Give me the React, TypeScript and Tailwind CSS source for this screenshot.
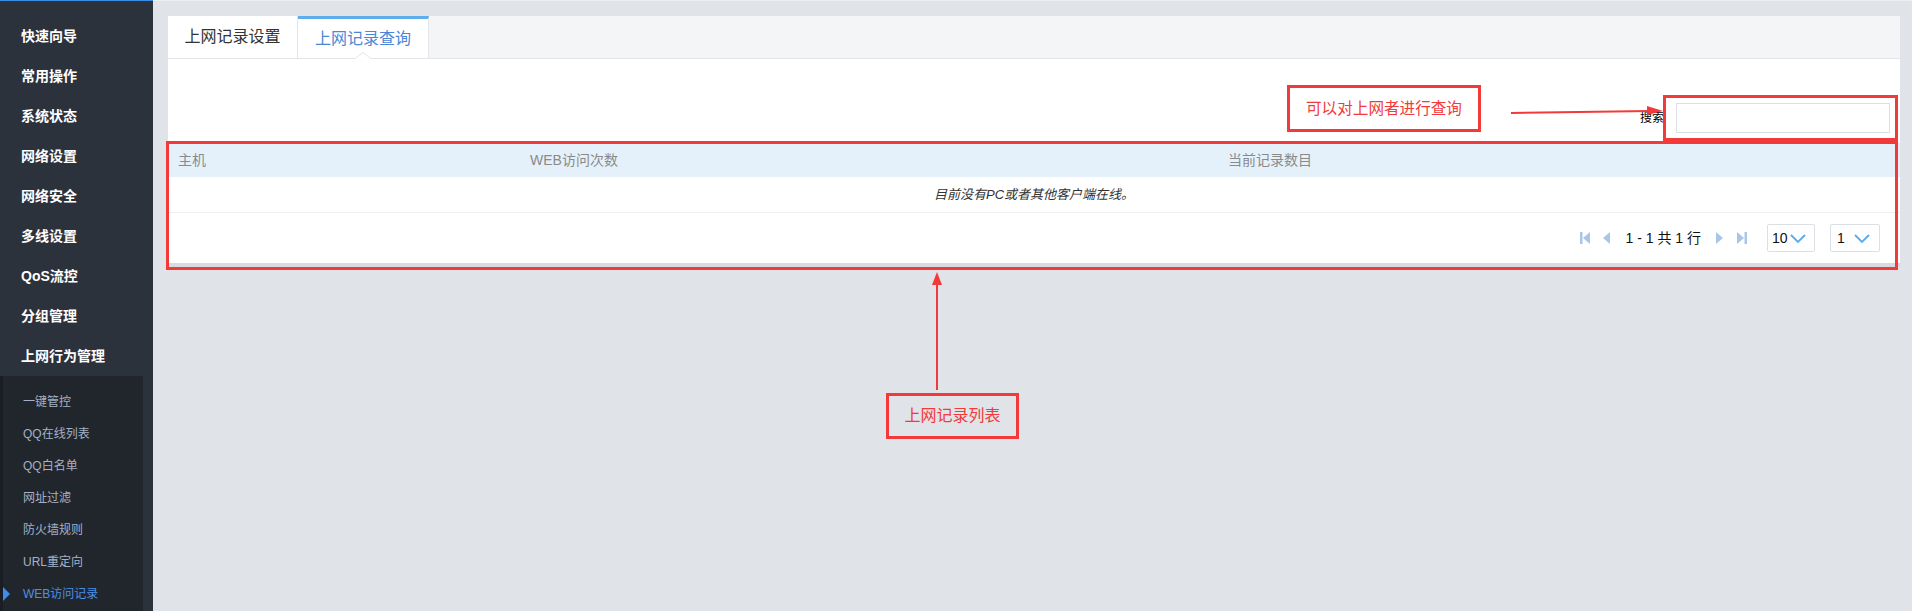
import type { ReactNode } from "react"

const mainMenu = ["快速向导", "常用操作", "系统状态", "网络设置", "网络安全", "多线设置", "QoS流控", "分组管理", "上网行为管理"]
const subMenu = ["一键管控", "QQ在线列表", "QQ白名单", "网址过滤", "防火墙规则", "URL重定向", "WEB访问记录"]

const font = "font-['Liberation_Sans','Noto_Sans_CJK_SC',sans-serif]"

function PagerIcon({ kind }: { kind: "first" | "prev" | "next" | "last" }): ReactNode {
  const fill = "#a9c5e8"
  if (kind === "first")
    return (
      <svg width="11" height="14" viewBox="0 0 11 14">
        <rect x="0" y="1" width="2.5" height="12" fill={fill} />
        <polygon points="10,1 3,7 10,13" fill={fill} />
      </svg>
    )
  if (kind === "last")
    return (
      <svg width="11" height="14" viewBox="0 0 11 14">
        <polygon points="1,1 8,7 1,13" fill={fill} />
        <rect x="8.5" y="1" width="2.5" height="12" fill={fill} />
      </svg>
    )
  if (kind === "prev")
    return (
      <svg width="7" height="14" viewBox="0 0 7 14">
        <polygon points="7,1 0,7 7,13" fill={fill} />
      </svg>
    )
  return (
    <svg width="7" height="14" viewBox="0 0 7 14">
      <polygon points="0,1 7,7 0,13" fill={fill} />
    </svg>
  )
}

function Chevron(): ReactNode {
  return (
    <svg width="16" height="9" viewBox="0 0 16 9">
      <polyline points="1,1 8,8 15,1" fill="none" stroke="#5aaaf0" strokeWidth="1.8" />
    </svg>
  )
}

function Sidebar(): ReactNode {
  return (
    <aside className="flex w-[153px] shrink-0 flex-col border-t border-[#3d8fe6] bg-[#2c323c] pt-[15px]">
      {mainMenu.map((item) => (
        <div key={item} className="flex h-[40px] items-center pl-[21px] text-[14px] font-bold text-white">{item}</div>
      ))}
      <div className="mr-[10px] flex-1 border-l-[3px] border-[#1a1e24] bg-[#21262d] pt-[10px]">
        {subMenu.map((item, i) => {
          const active = i === subMenu.length - 1
          return (
            <div key={item} className={`relative flex h-[32px] items-center pl-[20px] text-[12px] ${active ? "text-[#4b90e8]" : "text-[#a3b2c6]"}`}>
              {active && <span className="absolute left-0 top-1/2 h-0 w-0 -translate-y-1/2 border-y-[7px] border-l-[7px] border-y-transparent border-l-[#3d8ee8]" />}
              {item}
            </div>
          )
        })}
      </div>
    </aside>
  )
}

function Annotations(): ReactNode {
  const red = "#f23a3a"
  return (
    <>
      <div className="absolute left-[1287px] top-[85px] flex h-[47px] w-[194px] items-center justify-center border-[3px] border-[#f23a3a] text-[15.6px] text-[#f23a3a]">可以对上网者进行查询</div>
      <div className="absolute left-[1663px] top-[95px] h-[46px] w-[235px] border-[3px] border-[#f23a3a]" />
      <div className="absolute left-[166px] top-[141px] h-[129px] w-[1732px] border-[3px] border-[#f23a3a]" />
      <div className="absolute left-[886px] top-[393px] flex h-[46px] w-[133px] items-center justify-center border-[3px] border-[#f23a3a] text-[16px] text-[#f23a3a]">上网记录列表</div>
      <svg className="pointer-events-none absolute left-0 top-0" width="1912" height="611">
        <line x1="1511" y1="113" x2="1650" y2="111" stroke={red} strokeWidth="2" />
        <polygon points="1647,106 1663,111 1647,115" fill={red} />
        <line x1="937" y1="390" x2="937" y2="282" stroke={red} strokeWidth="2" />
        <polygon points="932,285 937,272 942,285" fill={red} />
      </svg>
    </>
  )
}

export default function App(): ReactNode {
  return (
    <div className={`relative flex h-[611px] w-[1912px] overflow-hidden ${font}`}>
      <Sidebar />
      <main className="flex-1 border-t border-[#eceef1] bg-[#e0e3e8] pl-[15px] pr-[12px] pt-[15px]">
        <section className="border-b-4 border-[#d8dbe0] bg-white">
          <div className="flex h-[43px] border-b border-[#e3e5e8] bg-[#f4f5f7]">
            <div className="flex w-[130px] items-center justify-center border-r border-[#e3e5e8] bg-white text-[16px] text-[#333]">上网记录设置</div>
            <div className="relative flex w-[131px] items-center justify-center border-r border-t-[3px] border-r-[#e3e5e8] border-t-[#5daeea] bg-white text-[16px] text-[#4a87d8]">
              上网记录查询
              <span className="absolute bottom-[-1px] left-1/2 h-0 w-0 -translate-x-1/2 border-x-[9px] border-b-[7px] border-x-transparent border-b-[#dfe2e6]" />
              <span className="absolute bottom-[-1px] left-1/2 h-0 w-0 -translate-x-1/2 border-x-[8px] border-b-[6px] border-x-transparent border-b-white" />
            </div>
          </div>
          <div className="flex items-center justify-end gap-[12px] pr-[10px] pt-[44px] pb-[10px]">
            <span className="text-[12px] text-black">搜索</span>
            <input className="h-[30px] w-[214px] border border-[#dcdfe3] bg-white outline-none" />
          </div>
          <div className="flex h-[34px] items-center bg-[#e5f1fa] text-[14px] text-[#8a8a8a]">
            <div className="w-[362px] pl-[10px]">主机</div>
            <div className="w-[698px]">WEB访问次数</div>
            <div className="flex-1">当前记录数目</div>
          </div>
          <div className="flex h-[36px] items-center justify-center border-b border-[#efefef] text-[13px] italic text-[#333]">目前没有PC或者其他客户端在线。</div>
          <div className="flex h-[50px] items-center justify-end pr-[20px] text-[14px] text-[#111]">
            <PagerIcon kind="first" />
            <span className="ml-[12px]"><PagerIcon kind="prev" /></span>
            <span className="ml-[16px]">1 - 1 共 1 行</span>
            <span className="ml-[15px]"><PagerIcon kind="next" /></span>
            <span className="ml-[13px]"><PagerIcon kind="last" /></span>
            <div className="ml-[20px] flex h-[28px] w-[48px] items-center justify-between rounded-[2px] border border-[#dcdfe3] pl-[4px] pr-[8px]">
              <span>10</span>
              <Chevron />
            </div>
            <div className="ml-[15px] flex h-[28px] w-[50px] items-center justify-between rounded-[2px] border border-[#dcdfe3] pl-[6px] pr-[9px]">
              <span>1</span>
              <Chevron />
            </div>
          </div>
        </section>
      </main>
      <Annotations />
    </div>
  )
}
